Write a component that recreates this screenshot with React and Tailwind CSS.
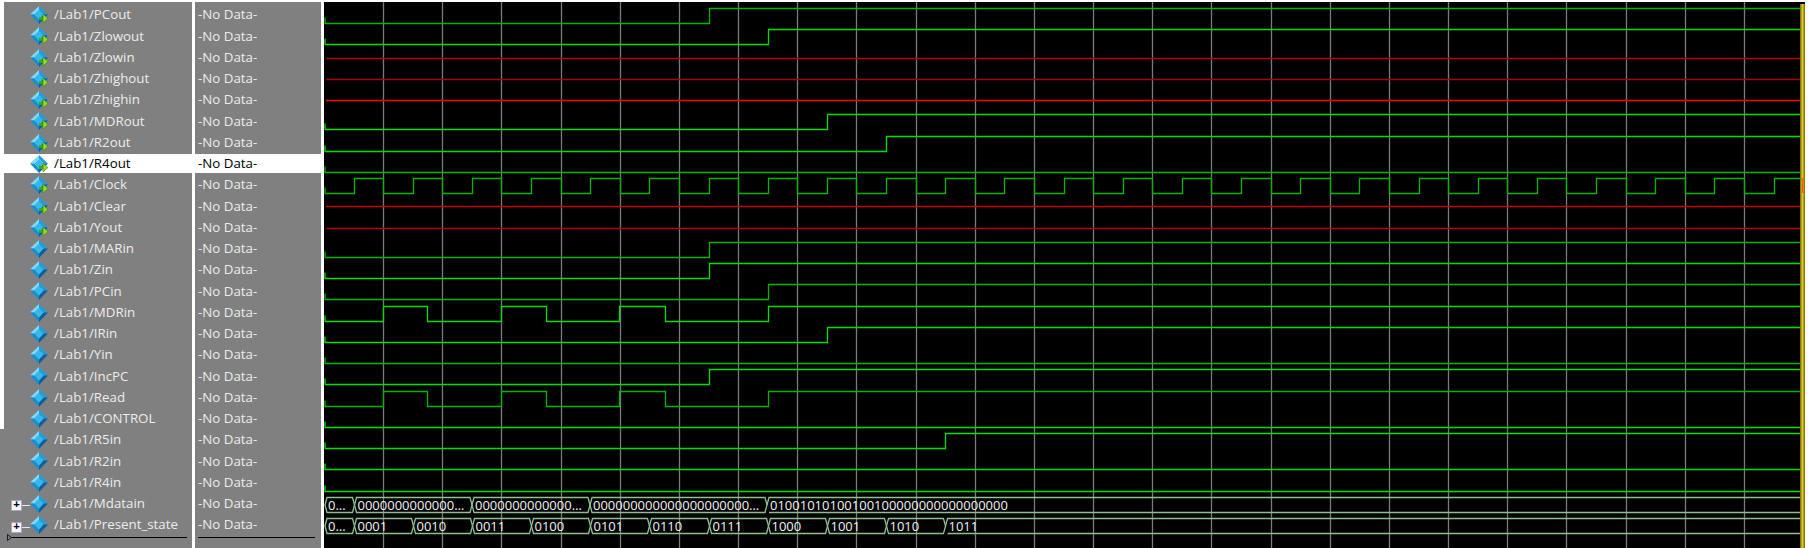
import React from "react";

const names = ["PCout","Zlowout","Zlowin","Zhighout","Zhighin","MDRout","R2out","R4out","Clock","Clear","Yout","MARin","Zin","PCin","MDRin","IRin","Yin","IncPC","Read","CONTROL","R5in","R2in","R4in","Mdatain","Present_state"];
const SELECTED = 7;
const STEP = 59.17;
const rise = (k) => Math.round(353.5 + STEP * k) + 0.5;
const fall = (k) => Math.round(383 + STEP * k) + 0.5;
const center = (i) => Math.round(15 + 21.25 * i);
const END = 1801;

const edges = {
  0: [rise(6)], 1: [rise(7)], 5: [rise(8)], 6: [rise(9)], 7: [], 11: [rise(6)], 12: [rise(6)], 13: [rise(7)],
  14: [383.5, 427.5, 501.5, 546.5, 619.5, 665.5, rise(7)],
  15: [rise(8)], 16: [], 17: [rise(6)],
  18: [383.5, 427.5, 501.5, 546.5, 619.5, 665.5, rise(7)],
  19: [], 20: [rise(10)], 21: [], 22: [],
  8: Array.from({ length: 25 }, (_, k) => [rise(k), fall(k)]).flat().filter((x) => x < END),
};
const redRows = { 2: "#b80000", 3: "#b00000", 4: "#ff0000", 9: "#c80000", 10: "#b80000" };
const dimRows = new Set([0, 7, 8, 11, 13, 16, 18]);

function wavePath(i) {
  const c = center(i);
  const lo = c + 8.5;
  const hi = c - 6.5;
  let d = `M325 ${lo - 6}V${lo}`;
  let level = lo;
  for (const x of edges[i]) {
    d += `H${x}`;
    level = level === lo ? hi : lo;
    d += `V${level}`;
  }
  return d + `H${END}`;
}

const mdata = [
  [325, rise(0), "0…"],
  [rise(0), 472, "0000000000000…"],
  [472, 590, "0000000000000…"],
  [590, 767, "000000000000000000000…"],
  [767, END, "01001010100100100000000000000000"],
];
const stateVals = ["0001","0010","0011","0100","0101","0110","0111","1000","1001","1010","1011"];
const state = [
  [325, rise(0), "0…"],
  ...stateVals.map((v, k) => [rise(k), k === 10 ? END : rise(k + 1), v]),
];

function Bus({ row, segs }) {
  const c = center(row);
  const top = c - 6.5;
  const bot = c + 8.5;
  const mid = c + 1;
  return (
    <g>
      {segs.map(([a, b, t], k) => {
        const last = b === END;
        const d = `M${a} ${mid}L${a + 2} ${top}H${last ? b : b - 2}${last ? `M${b} ${bot}` : `L${b} ${mid}L${b - 2} ${bot}`}H${a + 2}Z`;
        return (
          <g key={k}>
            <path d={d} fill="none" stroke="#8fbf8f" strokeWidth="1.3" />
            <text x={a + 3} y={c + 5.5} fill="#f2f2f2" fontSize="13" fontFamily="'Open Sans', sans-serif">{t}</text>
          </g>
        );
      })}
    </g>
  );
}

function SignalIcon({ arrow }) {
  return (
    <svg width="18" height="18" viewBox="0 0 18 18" className="shrink-0">
      <polygon points="9,0 0,8.5 4.5,8.5 9,4" fill="#7fd8f8" />
      <polygon points="9,0 18,8.5 13.5,8.5 9,4" fill="#1c9fdc" />
      <polygon points="0,8.5 9,18 9,13.5 4.5,8.5" fill="#1a8fd0" />
      <polygon points="18,8.5 9,18 9,13.5 13.5,8.5" fill="#0a5f9c" />
      <polygon points="9,4 13.5,8.5 9,13.5 4.5,8.5" fill="#2dbcf0" />
      {arrow && (
        <g>
          <rect x="9" y="11" width="5" height="3" fill="#38a818" />
          <polygon points="13,8 18,12.5 13,17" fill="#9ad820" stroke="#2f8a10" strokeWidth="0.6" />
        </g>
      )}
    </svg>
  );
}

function ExpandBox() {
  return (
    <div className="flex items-center mt-[4px] ml-[7px]">
      <div className="w-[11px] h-[11px] bg-[#f4f4fb] border border-[#a8a8c0] flex items-center justify-center text-black text-[11px] leading-none font-bold font-['Liberation_Mono',monospace]">+</div>
      <div className="w-[8px] h-px bg-[#e8e8e8]" />
    </div>
  );
}

const textFont = "font-['Open_Sans',sans-serif] text-[13.3px] leading-none whitespace-nowrap";

function NameRow({ i, name }) {
  const selected = i === SELECTED;
  const strip = i < 20 ? "border-l-4 border-white" : "pl-[4px]";
  return (
    <div className={`h-[21.25px] flex items-center ${strip}`}>
      <div className={`h-[19px] flex items-center ${selected ? "bg-white -ml-1 pl-1 w-[192px]" : "w-[188px]"}`}>
        <div className="w-[26px] shrink-0">{i >= 23 && <ExpandBox />}</div>
        <SignalIcon arrow={i <= 10} />
        <span className={`ml-[6px] ${textFont} ${selected ? "text-black" : "text-[#ececec]"}`}>/Lab1/{name}</span>
      </div>
    </div>
  );
}

function ValueRow({ i }) {
  const selected = i === SELECTED;
  return (
    <div className="h-[21.25px] flex items-center">
      <div className={`h-[19px] w-full flex items-center pl-[3px] ${textFont} ${selected ? "bg-white text-black" : "text-[#ececec]"}`}>-No Data-</div>
    </div>
  );
}

export default function App() {
  const grid = Array.from({ length: 24 }, (_, k) => Math.round(383 + STEP * k) + 0.5);
  return (
    <div className="flex w-[1808px] h-[548px] bg-white overflow-hidden">
      <div className="w-[192px] mt-[2px] bg-[#808080] flex flex-col shrink-0">
        <div className="h-[2.375px] border-l-4 border-white" />
        {names.map((n, i) => <NameRow key={n} i={i} name={n} />)}
        <div className="relative ml-[8px] w-[179px] h-px bg-black mt-px">
          <svg width="5" height="7" viewBox="0 0 5 7" className="absolute -left-[1px] -top-[3px]">
            <polygon points="0.5,0.5 4.5,3.5 0.5,6.5" fill="#808080" stroke="#000" strokeWidth="0.8" />
          </svg>
        </div>
      </div>
      <div className="w-[126px] ml-[3px] mt-[2px] bg-[#808080] flex flex-col shrink-0">
        <div className="h-[2.375px]" />
        {names.map((n, i) => <ValueRow key={n} i={i} />)}
        <div className="ml-[3px] w-[117px] h-px bg-black mt-px" />
      </div>
      <div className="ml-[3px] mt-[2px] w-[1481px] h-[546px] bg-black shrink-0">
        <svg width="1481" height="546" viewBox="324 2 1481 546" className="block">
          {grid.map((x) => <line key={x} x1={x} x2={x} y1="2" y2="548" stroke="#7a7a7a" strokeWidth="1.3" />)}
          {names.slice(0, 23).map((n, i) =>
            redRows[i] ? (
              <line key={n} x1="326" x2={END} y1={center(i) + 0.5} y2={center(i) + 0.5} stroke={redRows[i]} strokeWidth="1.3" />
            ) : (
              <path key={n} d={wavePath(i)} fill="none" stroke={dimRows.has(i) ? "#00b800" : "#00e000"} strokeWidth="1.3" />
            )
          )}
          <Bus row={23} segs={mdata} />
          <Bus row={24} segs={state} />
          <rect x="1800" y="4" width="5" height="544" fill="#8c7a00" />
          <rect x="1801.5" y="4" width="2" height="544" fill="#d8c838" />
          <rect x="1802" y="178" width="1.5" height="15" fill="#ff6000" />
        </svg>
      </div>
    </div>
  );
}
